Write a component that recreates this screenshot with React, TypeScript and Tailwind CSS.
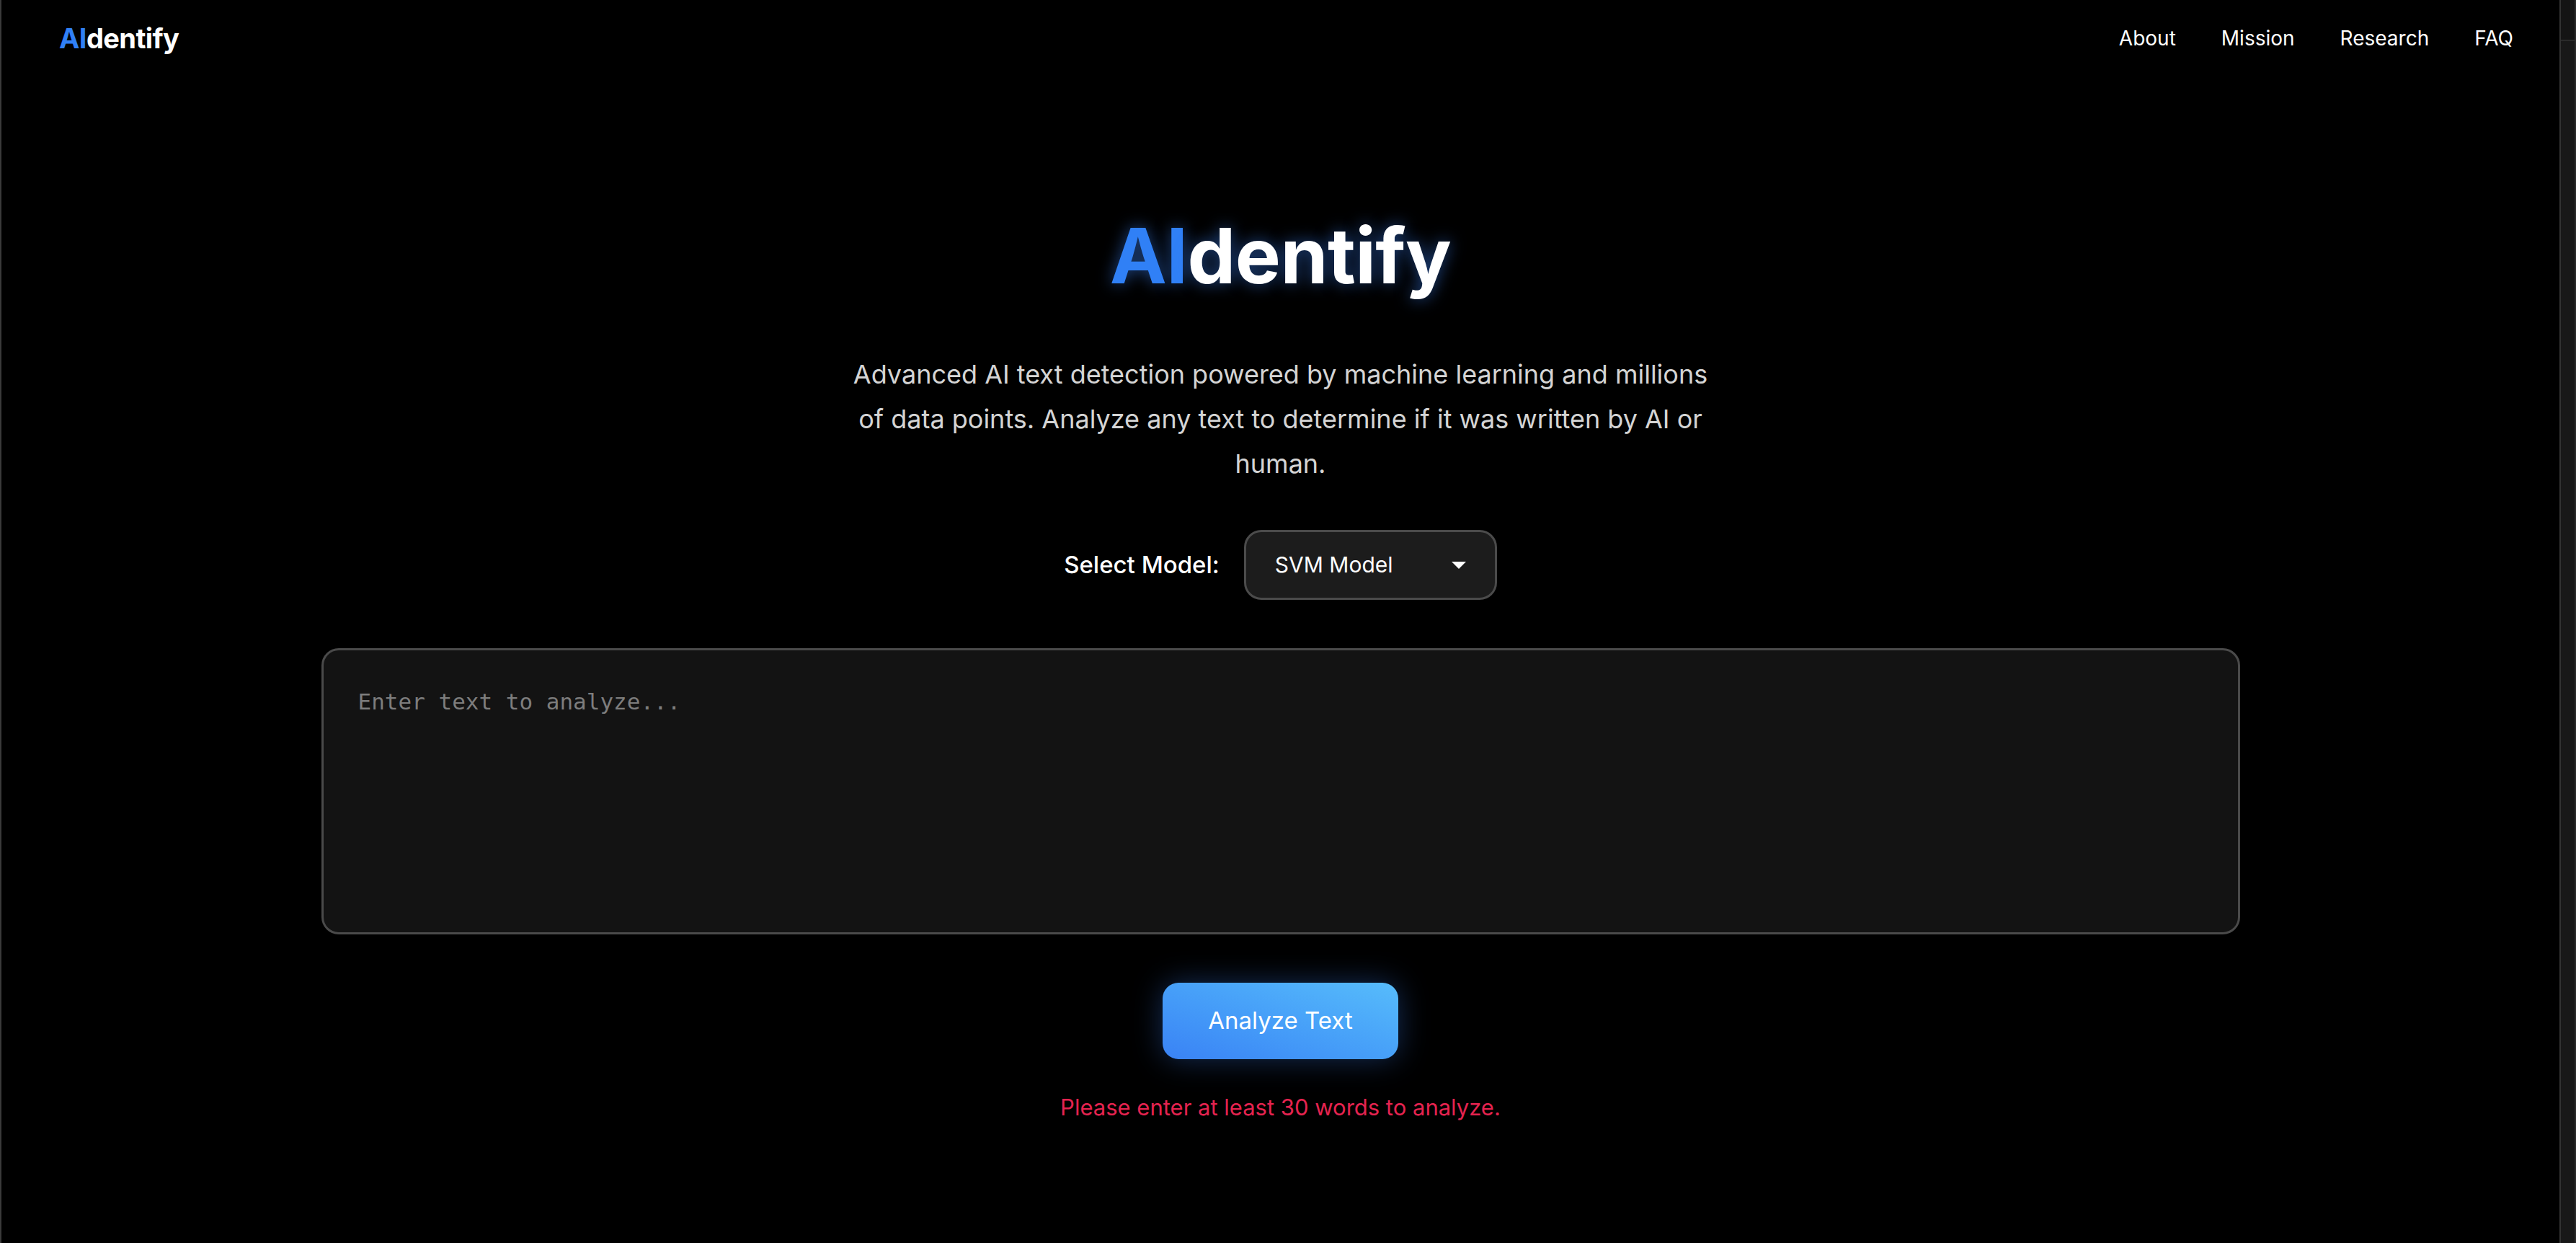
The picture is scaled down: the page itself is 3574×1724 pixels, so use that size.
import { useState } from "react";

const links = ["About", "Mission", "Research", "FAQ"];

function Header() {
  return (
    <header className="flex h-[106px] items-center justify-between pl-[80px] pr-[64px]">
      <a href="#" className="text-[38px] font-bold leading-none tracking-[-0.015em] text-white">
        <span className="text-[#3080f6]">AI</span>dentify
      </a>
      <nav className="flex items-center gap-[63px]">
        {links.map((l) => (
          <a key={l} href="#" className="text-[28px] leading-none text-white">
            {l}
          </a>
        ))}
      </nav>
    </header>
  );
}

function ModelSelect() {
  return (
    <div className="mt-[61px] flex items-center gap-[34px]">
      <span className="text-[33px] font-medium text-white">Select Model:</span>
      <div className="flex h-[97px] w-[351px] items-center justify-between rounded-[24px] border-[3px] border-[#4b4b4b] bg-[#1c1c1c] px-[40px]">
        <span className="text-[30px] text-white">SVM Model</span>
        <svg width="20" height="10" viewBox="0 0 20 10">
          <path d="M0 0h20L10 10z" fill="#fff" />
        </svg>
      </div>
    </div>
  );
}

export default function App() {
  const [text, setText] = useState("");

  return (
    <div className="flex h-screen w-full overflow-hidden bg-black font-['Inter',sans-serif]">
      <div className="w-[2px] bg-[#3a3a3a]" />
      <div className="flex-1 overflow-hidden">
        <Header />
        <main className="flex flex-col items-center">
          <h1 className="mt-[196px] text-[106px] font-bold leading-none tracking-[-0.005em] text-white [text-shadow:0_0_22px_rgba(59,130,246,0.55)]">
            <span className="text-[#3080f6]">AI</span>dentify
          </h1>
          <p className="mt-[80px] max-w-[1210px] text-center text-[36px] leading-[62px] text-[#d4d4d4]">
            Advanced AI text detection powered by machine learning and millions of data points. Analyze any text to determine if it was written by AI or human.
          </p>
          <ModelSelect />
          <textarea
            value={text}
            onChange={(e) => setText(e.target.value)}
            placeholder="Enter text to analyze..."
            className="mt-[67px] h-[397px] w-[2662px] resize-none rounded-[24px] border-[3px] border-[#4a4a4a] bg-[#131313] p-[48px] font-['DejaVu_Sans_Mono',monospace] text-[31px] leading-[1.5] text-white outline-none placeholder:text-[#7d7d7d]"
          />
          <button className="mt-[67px] h-[106px] w-[327px] rounded-[22px] bg-gradient-to-tr from-[#3a82f5] to-[#57bcfb] text-[33px] text-white shadow-[0_0_40px_rgba(59,130,246,0.35)]">
            Analyze Text
          </button>
          <p className="mt-[44px] text-[31px] leading-[45px] text-[#e5234f]">
            Please enter at least 30 words to analyze.
          </p>
        </main>
      </div>
      <div className="w-[2px] bg-[#333]" />
      <div className="flex w-[21px] flex-col border-r-[2px] border-[#2a2a2a] bg-[#181818]">
        <div className="h-[57px] border-b-[2px] border-[#2a2a2a] bg-[#141414]" />
      </div>
    </div>
  );
}
